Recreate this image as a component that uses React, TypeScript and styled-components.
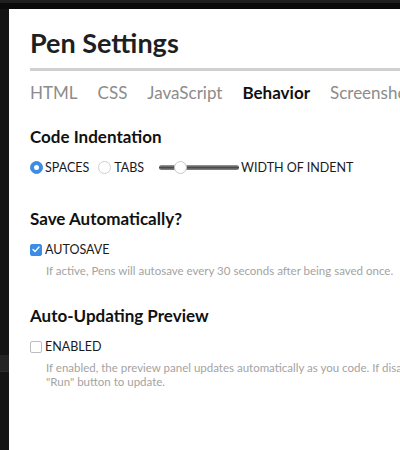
import React from "react";
import styled, { createGlobalStyle } from "styled-components";

const Global = createGlobalStyle`
  html, body { margin: 0; padding: 0; background: #131313; overflow: hidden; }
  body { font-family: Lato, "Open Sans", sans-serif; }
  * { box-sizing: border-box; }
`;

const Screen = styled.div`
  width: 400px;
  height: 450px;
  display: flex;
  flex-direction: column;
  background: #121212;
  overflow: hidden;
`;

const TopStrip = styled.div`
  height: 9px;
  flex: none;
  border-top: 3px solid #1f1f1f;
  background: #0b0b0b;
`;

const Body = styled.div`
  flex: 1;
  display: flex;
  min-height: 0;
`;

const Side = styled.div`
  width: 9px;
  flex: none;
  background: #141414;
  padding-top: 346px;
`;

const SideBand = styled.div`
  height: 17px;
  background: #242424;
  border-bottom: 1px solid #2e2e2e;
`;

const Panel = styled.div`
  flex: none;
  width: 520px;
  background: #fff;
  padding: 18px 0 0 21px;
  color: #1a1a1a;
`;

const Title = styled.h1`
  margin: 0;
  font-size: 27px;
  line-height: 1.2;
  font-weight: 700;
  color: #1e1f24;
`;

const Rule = styled.div`
  height: 3px;
  margin-top: 9px;
  background: #d0d0d0;
`;

const Tabs = styled.nav`
  display: flex;
  gap: 20px;
  margin-top: 12px;
  white-space: nowrap;
`;

const Tab = styled.span<{ $active?: boolean }>`
  font-size: 17px;
  line-height: 1.2;
  font-weight: ${(p) => (p.$active ? 700 : 400)};
  color: ${(p) => (p.$active ? "#111" : "#8c8c8c")};
`;

const Heading = styled.h2<{ $gap: number }>`
  margin: ${(p) => p.$gap}px 0 0;
  font-size: 17px;
  line-height: 1.2;
  font-weight: 700;
  color: #111;
`;

const Row = styled.div<{ $gap?: number }>`
  display: flex;
  align-items: center;
  margin-top: ${(p) => p.$gap ?? 12}px;
  height: 16px;
`;

const Label = styled.span<{ $ml?: number }>`
  font-size: 12.5px;
  line-height: 1.2;
  color: #1a1a1a;
  margin-left: ${(p) => p.$ml ?? 2}px;
  white-space: nowrap;
`;

const Radio = styled.span<{ $on?: boolean; $ml?: number }>`
  width: 13px;
  height: 13px;
  border-radius: 50%;
  flex: none;
  margin-left: ${(p) => p.$ml ?? 0}px;
  background: ${(p) => (p.$on ? "#3d8ce6" : "#fff")};
  border: 1px solid ${(p) => (p.$on ? "#3d8ce6" : "#cfcfcf")};
  display: flex;
  align-items: center;
  justify-content: center;
  &::after {
    content: "";
    width: 5px;
    height: 5px;
    border-radius: 50%;
    background: ${(p) => (p.$on ? "#fff" : "transparent")};
  }
`;

const Slider = styled.div`
  position: relative;
  width: 80px;
  height: 5px;
  margin-left: 15px;
  border-radius: 3px;
  background: linear-gradient(#a0a0a0, #4a4a4a 50%, #8a8a8a);
  flex: none;
`;

const Thumb = styled.span`
  position: absolute;
  left: 15px;
  top: -4px;
  width: 13px;
  height: 13px;
  border-radius: 50%;
  background: #fff;
  border: 1px solid #c8c8c8;
`;

const Box = styled.span<{ $on?: boolean }>`
  width: 12px;
  height: 12px;
  flex: none;
  border-radius: 2px;
  background: ${(p) => (p.$on ? "#3d8ce6" : "#fff")};
  border: 1px solid ${(p) => (p.$on ? "#3d8ce6" : "#bdbdbd")};
  display: flex;
  align-items: center;
  justify-content: center;
`;

const Help = styled.p`
  margin: 6px 0 0;
  padding-left: 16px;
  width: 456px;
  font-size: 11.5px;
  line-height: 14px;
  color: #a3a3a3;
`;

const Check = () => (
  <svg width="8" height="7" viewBox="0 0 8 7">
    <path d="M1 3.6 L3 5.6 L7 1" fill="none" stroke="#fff" strokeWidth="1.4" strokeLinecap="round" strokeLinejoin="round" />
  </svg>
);

export default function App() {
  return (
    <Screen>
      <Global />
      <TopStrip />
      <Body>
        <Side>
          <SideBand />
        </Side>
        <Panel>
          <Title>Pen Settings</Title>
          <Rule />
          <Tabs>
            <Tab>HTML</Tab>
            <Tab>CSS</Tab>
            <Tab>JavaScript</Tab>
            <Tab $active>Behavior</Tab>
            <Tab>Screenshot</Tab>
          </Tabs>

          <Heading $gap={23}>Code Indentation</Heading>
          <Row>
            <Radio $on />
            <Label>SPACES</Label>
            <Radio $ml={9} />
            <Label $ml={3}>TABS</Label>
            <Slider>
              <Thumb />
            </Slider>
            <Label>WIDTH OF INDENT</Label>
          </Row>

          <Heading $gap={34}>Save Automatically?</Heading>
          <Row>
            <Box $on>
              <Check />
            </Box>
            <Label $ml={3}>AUTOSAVE</Label>
          </Row>
          <Help>If active, Pens will autosave every 30 seconds after being saved once.</Help>

          <Heading $gap={28}>Auto-Updating Preview</Heading>
          <Row $gap={13}>
            <Box />
            <Label $ml={3}>ENABLED</Label>
          </Row>
          <Help>
            If enabled, the preview panel updates automatically as you code. If disabled, use the "Run" button to update.
          </Help>
        </Panel>
      </Body>
    </Screen>
  );
}
